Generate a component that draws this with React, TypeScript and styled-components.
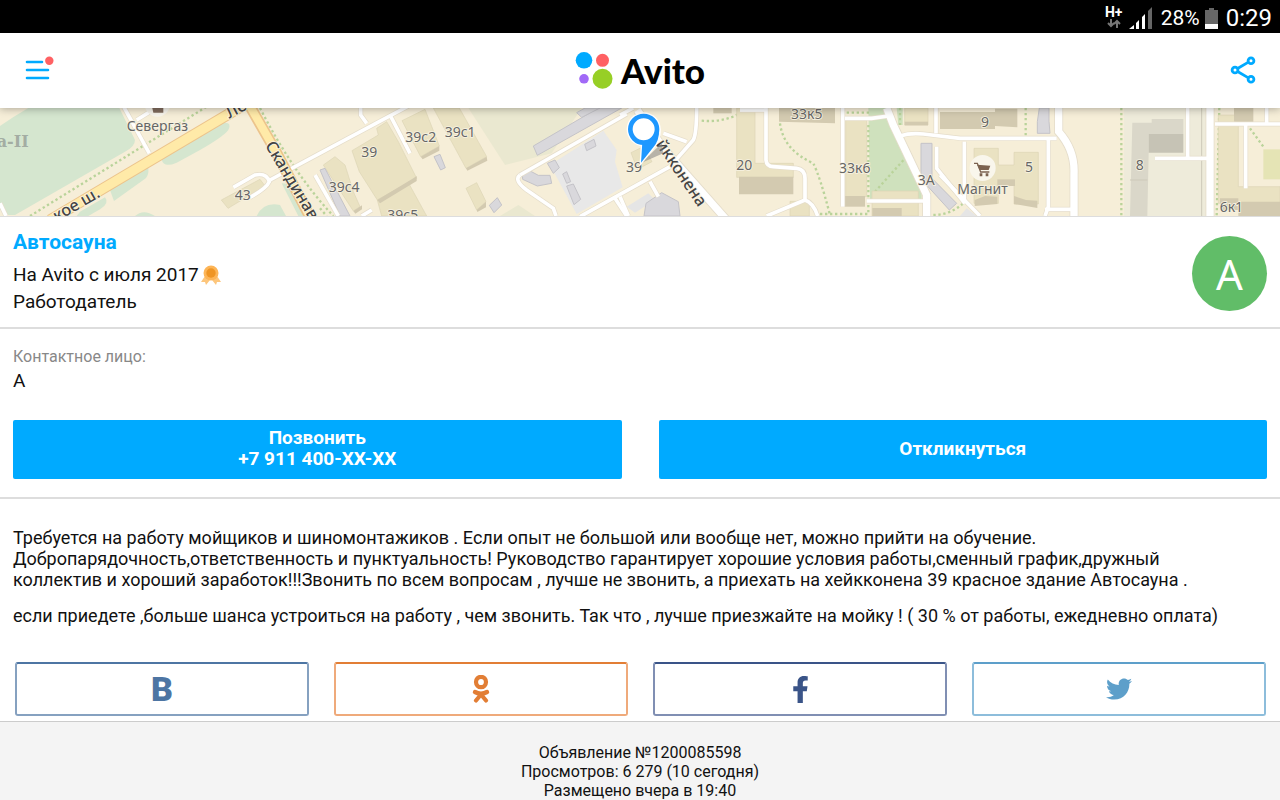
import React from 'react';
import styled, { createGlobalStyle } from 'styled-components';
import { FaFacebookF, FaTwitter } from 'react-icons/fa';

const GlobalStyle = createGlobalStyle`
  * { box-sizing: border-box; }
  body {
    margin: 0;
    background: #fff;
    color: #111;
    font: 18px/21px Roboto, "Liberation Sans", sans-serif;
  }
  h1, h2, p { margin: 0; }
`;

const Page = styled.div`
  display: flex;
  flex-direction: column;
  min-height: 100vh;
`;

const StatusBar = styled.div`
  display: flex;
  align-items: center;
  justify-content: flex-end;
  height: 33px;
  padding: 4px 8px 0 0;
  background: #000;
  color: #fff;
`;

const Network = styled.span`
  display: flex;
  flex-direction: column;
  align-items: center;
  width: 18px;
  margin-right: 6px;
  padding-bottom: 4px;
  font-size: 14px;
  font-weight: 700;
  line-height: 13px;
`;

const Percent = styled.span`
  margin: 0 5px 0 8px;
  font-size: 21px;
`;

const Clock = styled.time`
  margin-left: 8px;
  font-size: 24px;
`;

const Header = styled.header`
  position: relative;
  z-index: 1;
  display: flex;
  align-items: center;
  justify-content: space-between;
  height: 75px;
  padding: 0 24px 2px;
  background: #fff;
  box-shadow: 0 1px 8px rgba(0, 0, 0, 0.3);
`;

const IconButton = styled.button`
  display: flex;
  padding: 0;
  border: 0;
  background: none;
  cursor: pointer;
`;

const Logo = styled.a`
  display: flex;
  align-items: center;
  gap: 8px;
  color: #000;
  font: 900 35px/40px Lato, sans-serif;
  text-decoration: none;
`;

const MapView = styled.svg`
  display: block;
  width: 100%;
  height: 108px;
  background: #f6eed8;
`;

const MapLabel = styled.text`
  fill: #666;
  stroke: #f8f3e2;
  stroke-width: 5px;
  paint-order: stroke;
  font-family: "Noto Sans", sans-serif;
  font-size: 42px;
`;

const StreetLabel = styled(MapLabel)`
  fill: #444;
  font-size: 49px;
  font-weight: 500;
`;

const Seller = styled.section`
  display: flex;
  align-items: flex-start;
  justify-content: space-between;
  padding: 13px 13px 12px;
  border-top: 1px solid #ddd;
  border-bottom: 2px solid #ddd;
`;

const SellerName = styled.h1`
  margin-bottom: 7px;
  color: #0af;
  font-size: 21px;
  line-height: 24px;
`;

const SellerLine = styled.p`
  display: flex;
  align-items: center;
  gap: 2px;
  font-size: 19px;
  line-height: 27px;
`;

const Avatar = styled.div`
  display: flex;
  align-items: center;
  justify-content: center;
  width: 75px;
  height: 75px;
  margin-top: 6px;
  border-radius: 50%;
  background: #61bd68;
  color: #fff;
  font: 42px/75px "Noto Sans", sans-serif;
`;

const Contact = styled.section`
  padding: 16px 13px 18px;
  border-bottom: 2px solid #ddd;
`;

const ContactLabel = styled.p`
  color: #888;
  font-size: 16px;
  line-height: 24px;
`;

const ContactName = styled.p`
  font-size: 19px;
  line-height: 24px;
`;

const Actions = styled.div`
  display: grid;
  grid-template-columns: 1fr 1fr;
  gap: 37px;
  margin-top: 27px;
`;

const ActionButton = styled.button`
  height: 59px;
  padding: 0 0 3px;
  border: 0;
  border-radius: 2px;
  background: #0af;
  color: #fff;
  font: 700 19px/21px Roboto, sans-serif;
  cursor: pointer;
`;

const Description = styled.section`
  display: flex;
  flex-direction: column;
  gap: 15px;
  padding: 28px 13px 0;
`;

const Share = styled.nav`
  display: grid;
  grid-template-columns: repeat(4, 1fr);
  gap: 25px;
  padding: 36px 14px 5px 15px;
`;

const ShareLink = styled.a<{ $color: string; $edge: string }>`
  display: flex;
  align-items: center;
  justify-content: center;
  height: 54px;
  border: 2px solid ${(p) => p.$edge};
  border-top-color: ${(p) => p.$color};
  border-radius: 3px;
  color: ${(p) => p.$color};
  text-decoration: none;
`;

const VkLetter = styled.span`
  font: 900 34px/34px Roboto, sans-serif;
`;

const Footer = styled.footer`
  flex: 1;
  padding: 21px 13px 0;
  border-top: 1px solid #ccc;
  background: #f4f4f4;
  font-size: 16px;
  line-height: 19px;
  text-align: center;
`;

type Shape = { d: string; fill: string };

const areas: Shape[] = [
  { d: 'M0 78 Q40 50 85 24 H358 L405 120 Q405 140 375 155 L45 345 H15 L0 315Z', fill: '#d5e6cf' },
  { d: 'M485 178 L655 72 Q700 60 685 90 Q670 110 600 150 L530 188 Q490 205 485 178Z', fill: '#d5e6cf' },
  { d: 'M328 265 L445 200 Q448 232 430 240 L342 303Z', fill: '#d5e6cf' },
  { d: 'M240 335 L315 292 Q330 310 300 328 L265 348 H230Z', fill: '#d5e6cf' },
  { d: 'M405 348 Q430 325 465 348Z', fill: '#d5e6cf' },
  { d: 'M770 348 Q790 305 840 315 L858 348Z', fill: '#d5e6cf' },
  { d: 'M845 250 Q865 250 880 265 L945 348 H895Z', fill: '#d5e6cf' },
  { d: 'M1405 24 H1745 L1655 160 L1515 195Z', fill: '#eae8d0' },
  { d: 'M1500 348 L1555 315 L1605 348Z', fill: '#eae8d0' },
  { d: 'M1650 195 L1810 92 L1850 150 L1845 185 L1868 262 L1730 342Z', fill: '#e8e8e8' },
  { d: 'M2605 24 H2660 L2680 80 L2765 270 V298 H2610Z', fill: '#cfe1bd' },
  { d: 'M2690 24 H2708 V75 H2695Z', fill: '#cfe1bd' },
  { d: 'M3372 24 H3620 V348 H3372Z', fill: '#eeebda' },
  { d: 'M3790 148 H3840 V238 H3790Z', fill: '#e5e4b5' },
  { d: 'M1880 320 L1945 280 L1965 300 L1905 338Z M2880 348 L2900 325 L2930 348Z', fill: '#e5e5e5' },
];

const yellowBuildings = [
  'M970 195 L1005 170 L1035 195 L1060 275 L1080 320 L1060 333Z',
  'M1056 152 L1135 105 L1130 85 L1160 65 L1195 125 L1250 235 L1132 300 L1078 215Z',
  'M1132 300 L1225 248 L1280 348 H1145Z',
  'M1206 62 L1275 28 L1318 138 L1262 170Z',
  'M1300 24 H1378 L1460 170 L1398 205Z',
  'M1398 265 L1430 248 L1458 305 L1430 330Z',
  'M664 300 L780 238 L795 258 L684 325Z',
  'M1893 158 L1930 140 L1956 185 L1912 208Z',
  'M2210 24 H2265 V190 H2380 V232 H2210Z',
  'M2537 60 H2600 V290 H2537Z',
  'M2370 304 H2428 V348 H2370Z',
  'M2616 273 H2755 V348 H2616Z',
  'M2714 24 H2784 V75 H2714Z',
  'M2922 145 H2995 V195 H3042 V157 H3115 V312 H3042 V255 H2995 V310 H2922Z',
  'M3655 45 H3715 V260 H3840 V310 H3655Z',
];

const brownBuildings = [
  'M2217 230 H2380 V283 H2217Z',
  'M2140 24 H2195 V40 H2140Z',
  'M2337 24 H2505 V70 L2337 65Z',
  'M2534 288 H2595 V320 H2534Z',
  'M2617 324 H2705 V348 H2617Z',
  'M2714 65 H2784 V76 H2714Z',
  'M2820 36 H2985 V87 H2820Z',
  'M2985 26 H3052 V82 L2985 78Z',
  'M2992 238 H3045 V258 H2992Z',
  'M2924 300 L2955 288 L2992 290 V312 L2924 318Z',
  'M3042 288 L3078 300 L3112 302 V324 L3042 312Z',
  'M3702 24 H3760 V70 L3702 65Z',
  'M3660 295 H3715 V305 H3840 V348 H3715 V330 H3660Z',
  'M1262 170 L1318 138 L1318 152 L1268 178Z',
  'M1398 205 L1460 170 L1462 182 L1402 212Z',
  'M1430 330 L1458 305 V322 L1432 336Z',
  'M1240 235 L1250 228 V243 L1140 310 L1132 300Z',
  'M1060 333 L1086 316 V328 L1066 341Z',
];

const greyBuildings = [
  'M960 210 L975 205 L1050 348 H1020Z',
  'M1600 138 L1795 24 H1865 L1612 166Z',
  'M1730 38 L1755 24 H1800 L1745 52Z',
  'M1302 170 L1320 163 L1336 203 L1322 210Z',
  'M1468 316 L1492 293 L1505 315 L1482 338Z',
  'M1567 220 L1585 210 L1615 226 H1650 L1655 250 L1612 258 L1568 238Z',
  'M1642 190 L1665 180 L1678 203 L1660 220Z',
  'M1688 222 L1700 215 L1712 245 L1700 250Z',
  'M1700 258 L1720 252 L1742 298 L1722 314Z',
  'M1754 133 L1782 118 L1788 138 L1760 152Z',
  'M1938 310 L1985 278 L2035 305 L2040 348 H1932Z',
  'M2763 130 H2796 V235 L2870 310 L2848 330 L2775 250 L2763 240Z',
  'M3118 24 H3147 V64 L3150 100 H3112 V65Z',
];

const stoneBuildings = [
  'M3397 68 H3455 V57 H3550 V102 H3446 V158 L3442 348 H3390Z',
];

const roads = [
  'M360 0 L448 160', 'M410 60 L455 32', 'M0 310 L18 348',
  'M810 240 L1240 10', 'M1170 45 L1230 160', 'M1100 70 L1082 45 V20', 'M945 225 L1015 348', 'M1085 348 L1115 330',
  'M700 262 L765 225 Q800 218 808 245 Q800 265 750 292',
  'M1560 225 L1880 42', 'M1560 225 Q1540 240 1580 270 L1660 325 L1668 348', 'M1740 350 L2010 200 L2080 120 Q2090 100 2090 24',
  'M1845 295 L1880 348', 'M1950 245 L1975 290', 'M1990 100 L2060 125', 'M1860 45 L1900 24', 'M1860 290 L1885 348',
  'M2298 24 V180 Q2300 200 2320 200 L2390 205 Q2415 208 2415 235 V300 L2300 348', 'M2415 300 Q2440 308 2453 348', 'M2220 30 H2300',
  'M2528 24 V320', 'M2535 55 L2615 55 L2665 48', 'M2600 303 H2780', 'M2700 108 Q2730 98 2770 102 L2880 115 H3170', 'M2808 100 V24',
  'M2810 140 V205 L2895 310', 'M2820 225 L2940 348', 'M2893 125 V300', 'M3145 120 V320 L3135 348', 'M3135 328 H3215', 'M3465 175 H3625', 'M3563 24 V175', 'M3645 72 H3840', 'M3737 75 V265', 'M3800 24 V70',
];

const wideRoads = ['M2660 24 L2680 75 L2780 285 V348', 'M3176 20 V95 Q3225 150 3222 220 V348', 'M3630 20 V348', 'M1912 30 L1990 145 L2180 360'];

const paths = [
  'M90 348 L620 20', 'M780 24 Q880 220 1000 348', 'M2105 62 Q2170 68 2220 40', 'M2340 70 Q2350 150 2440 190 Q2460 230 2490 345', 'M2460 342 H2605 V70', 'M2625 275 L2715 175', 'M2540 38 H2610', 'M3077 24 V110', 'M3364 24 V348', 'M3658 24 L3650 348', 'M3750 85 L3790 140', 'M2800 345 Q2850 345 2890 310', 'M2700 24 V75', 'M960 325 L980 348',
];

function CityMap() {
  return (
    <MapView viewBox="0 24 3840 324" preserveAspectRatio="xMidYMid slice" role="img" aria-label="Карта">
      {areas.map((a) => <path key={a.d} {...a} />)}
      {paths.map((d) => <path key={d} d={d} fill="none" stroke="#b9d39a" strokeWidth="7" strokeDasharray="7 8" />)}
      {yellowBuildings.map((d) => <path key={d} d={d} fill="#eae2c2" stroke="#ddd4b5" strokeWidth="2" />)}
      {brownBuildings.map((d) => <path key={d} d={d} fill="#d3cab0" />)}
      {greyBuildings.map((d) => <path key={d} d={d} fill="#d9d8dc" stroke="#c4c3c8" strokeWidth="3" />)}
      {stoneBuildings.map((d) => <path key={d} d={d} fill="#dad7c9" />)}
      <path d="M3446 102 H3550 V158 H3446Z" fill="#c6c3b5" />
      <path d="M3390 240 H3442 M3605 24 V348" stroke="#cdc9b9" strokeWidth="3" />
      {roads.map((d) => <path key={d} d={d} fill="none" stroke="#e5ddcb" strokeWidth="15" />)}
      {wideRoads.map((d) => <path key={d} d={d} fill="none" stroke="#e5ddcb" strokeWidth="27" />)}
      {roads.map((d) => <path key={d} d={d} fill="none" stroke="#fff" strokeWidth="11" />)}
      {wideRoads.map((d) => <path key={d} d={d} fill="none" stroke="#fff" strokeWidth="22" />)}
      <g fill="none">
        <path d="M150 360 L740 10 M745 10 L825 150 L940 370" stroke="#ecc48c" strokeWidth="34" />
        <path d="M150 360 L740 10" stroke="#ffeaa8" strokeWidth="28" />
        <path d="M745 10 L825 150 L940 370" stroke="#ffeaa8" strokeWidth="24" />
      </g>

      <circle cx="472" cy="12" r="38" fill="#f8f5ec" />
      <path d="M455 15 H490 V38 H460Z" fill="#806b5d" />
      <MapLabel x="380" y="94">Севергаз</MapLabel>
      <text x="-10" y="142" fill="#a3ada3" fontFamily="DejaVu Serif, serif" fontWeight="700" fontSize="48">а-II</text>
      <MapLabel x="704" y="300">43</MapLabel>
      <StreetLabel transform="translate(170 366) rotate(-30)">кое ш.</StreetLabel>
      <StreetLabel transform="translate(688 56) rotate(-28)">Ле</StreetLabel>
      <StreetLabel transform="translate(794 136) rotate(59)">Скандинав</StreetLabel>
      <MapLabel x="1084" y="172">39</MapLabel>
      <MapLabel x="1216" y="125">39с2</MapLabel>
      <MapLabel x="1334" y="111">39с1</MapLabel>
      <MapLabel x="986" y="276">39с4</MapLabel>
      <MapLabel x="1162" y="361">39с5</MapLabel>
      <MapLabel x="1878" y="216">39</MapLabel>
      <StreetLabel transform="translate(1966 132) rotate(56)">йкконена</StreetLabel>
      <MapLabel x="2209" y="209">20</MapLabel>
      <MapLabel x="2373" y="58">33к5</MapLabel>
      <MapLabel x="2517" y="220">33к6</MapLabel>
      <MapLabel x="2753" y="254">3А</MapLabel>
      <MapLabel x="2943" y="81">9</MapLabel>
      <MapLabel x="3075" y="217">5</MapLabel>
      <MapLabel x="2872" y="282">Магнит</MapLabel>
      <MapLabel x="3407" y="211">8</MapLabel>
      <MapLabel x="3659" y="337">6к1</MapLabel>

      <circle cx="2948" cy="204" r="39" fill="#f9f6ec" />
      <path d="M2922 190 H2932 L2942 216 H2968" fill="none" stroke="#7b6250" strokeWidth="4" />
      <path d="M2931 194 L2971 197 L2966 210 L2939 210Z M2939 220 h8 v9 h-8z M2957 220 h8 v9 h-8z" fill="#7b6250" />

      <path d="M1925 188 L1985 130 L1990 160Z" fill="#777" opacity=".5" />
      <path d="M1923 188 L1927 126 L1978 92 Q1980 120 1960 142Z" fill="#1e98ff" stroke="#fff" strokeWidth="8" />
      <circle cx="1931" cy="88" r="51" fill="#fff" />
      <path d="M1923 188 L1927 126 L1977 92 Q1978 120 1960 142Z" fill="#1e98ff" />
      <circle cx="1931" cy="88" r="40" fill="#fff" stroke="#1e98ff" strokeWidth="14" />
    </MapView>
  );
}

function Arrows() {
  return (
    <svg width="14" height="9" viewBox="0 0 14 9" fill="none" stroke="#777" strokeWidth="2" aria-hidden="true">
      <path d="M4 0 V7 M1 4 L4 7 L7 4 M10 9 V2 M7 5 L10 2 L13 5" />
    </svg>
  );
}

function Signal() {
  return (
    <svg width="24" height="23" viewBox="0 0 24 23" aria-hidden="true">
      <path d="M0 22 L5 18 V22Z M7 16 L10 13 V22 H7Z M13 10 L16 7 V22 H13Z" fill="#fff" />
      <path d="M19 4 L23 0 V22 H19Z" fill="#666" />
    </svg>
  );
}

function Battery() {
  return (
    <svg width="13" height="21" viewBox="0 0 13 21" aria-hidden="true">
      <path d="M4 0 H9 V2 H13 V16 H0 V2 H4Z" fill="#666" />
      <path d="M0 16 H13 V21 H0Z" fill="#fff" />
    </svg>
  );
}

function Medal() {
  return (
    <svg width="20" height="20" viewBox="0 0 20 20" aria-hidden="true">
      <path d="M4 11 L0 17 L4 17 L5 20 L9 15 H11 L15 20 L16 17 L20 17 L16 11Z" fill="#fdc67c" />
      <circle cx="10" cy="8" r="7.5" fill="#fdb557" />
      <circle cx="10" cy="8" r="4.7" fill="#ef9524" />
    </svg>
  );
}

function Odnoklassniki() {
  return (
    <svg width="18" height="28" viewBox="0 0 18 28" fill="none" stroke="currentColor" strokeLinecap="round" aria-hidden="true">
      <ellipse cx="9" cy="7" rx="5" ry="5.2" strokeWidth="4.2" />
      <path d="M3 17 Q9 20.4 15 17" strokeWidth="4.4" />
      <path d="M9 19.5 L4 25.5 M9 19.5 L14 25.5" strokeWidth="4.2" />
    </svg>
  );
}

export default function App() {
  return (
    <Page>
      <GlobalStyle />
      <StatusBar>
        <Network>H+<Arrows /></Network>
        <Signal />
        <Percent>28%</Percent>
        <Battery />
        <Clock>0:29</Clock>
      </StatusBar>
      <Header>
        <IconButton aria-label="Меню">
          <svg width="32" height="28" viewBox="0 0 32 28" aria-hidden="true">
            <path d="M3 6 H18 M3 14 H24 M3 22 H24" stroke="#0af" strokeWidth="2.6" strokeLinecap="round" />
            <circle cx="25.3" cy="4.8" r="4.2" fill="#ff6163" />
          </svg>
        </IconButton>
        <Logo href="#">
          <svg width="38" height="38" viewBox="0 0 38 38" aria-hidden="true">
            <circle cx="9" cy="9.3" r="8.3" fill="#0af" />
            <circle cx="27.5" cy="9.3" r="6.5" fill="#ff6163" />
            <circle cx="9" cy="27.8" r="4.8" fill="#a169f7" />
            <circle cx="27.5" cy="27.8" r="10" fill="#97cf26" />
          </svg>
          Avito
        </Logo>
        <IconButton aria-label="Поделиться">
          <svg width="32" height="28" viewBox="-6 0 32 28" fill="none" stroke="#0af" strokeWidth="2.8" aria-hidden="true">
            <path d="M8 12.3 L18 6.4 M8 15.7 L18 21.6" />
            <circle cx="5" cy="14" r="2.9" />
            <circle cx="21" cy="4.7" r="2.9" />
            <circle cx="21" cy="23.3" r="2.9" />
          </svg>
        </IconButton>
      </Header>
      <CityMap />
      <Seller>
        <div>
          <SellerName>Автосауна</SellerName>
          <SellerLine>На Avito с июля 2017 <Medal /></SellerLine>
          <SellerLine>Работодатель</SellerLine>
        </div>
        <Avatar>А</Avatar>
      </Seller>
      <Contact>
        <ContactLabel>Контактное лицо:</ContactLabel>
        <ContactName>А</ContactName>
        <Actions>
          <ActionButton>Позвонить<br />+7 911 400-XX-XX</ActionButton>
          <ActionButton>Откликнуться</ActionButton>
        </Actions>
      </Contact>
      <Description>
        <p>
          Требуется на работу мойщиков и шиномонтажиков . Если опыт не большой или вообще нет, можно прийти на обучение.
          <br />
          Добропарядочность,ответственность и пунктуальность! Руководство гарантирует хорошие условия работы,сменный
          график,дружный
          <br />
          коллектив и хороший заработок!!!Звонить по всем вопросам , лучше не звонить, а приехать на
          хейкконена 39 красное здание Автосауна .
        </p>
        <p>
          если приедете ,больше шанса устроиться на работу , чем звонить. Так что , лучше приезжайте на мойку ! ( 30 %
          от работы, ежедневно оплата)
        </p>
      </Description>
      <Share aria-label="Поделиться">
        <ShareLink href="#vk" aria-label="ВКонтакте" $color="#4d75a3" $edge="#86a1c0"><VkLetter>B</VkLetter></ShareLink>
        <ShareLink href="#ok" aria-label="Одноклассники" $color="#e27e35" $edge="#efaa7b"><Odnoklassniki /></ShareLink>
        <ShareLink href="#fb" aria-label="Facebook" $color="#3a5488" $edge="#808fb3"><FaFacebookF size={27} /></ShareLink>
        <ShareLink href="#tw" aria-label="Twitter" $color="#5d9fca" $edge="#8dbddb"><FaTwitter size={26} /></ShareLink>
      </Share>
      <Footer>
        <p>Объявление №1200085598</p>
        <p>Просмотров: 6 279 (10 сегодня)</p>
        <p>Размещено вчера в 19:40</p>
      </Footer>
    </Page>
  );
}
